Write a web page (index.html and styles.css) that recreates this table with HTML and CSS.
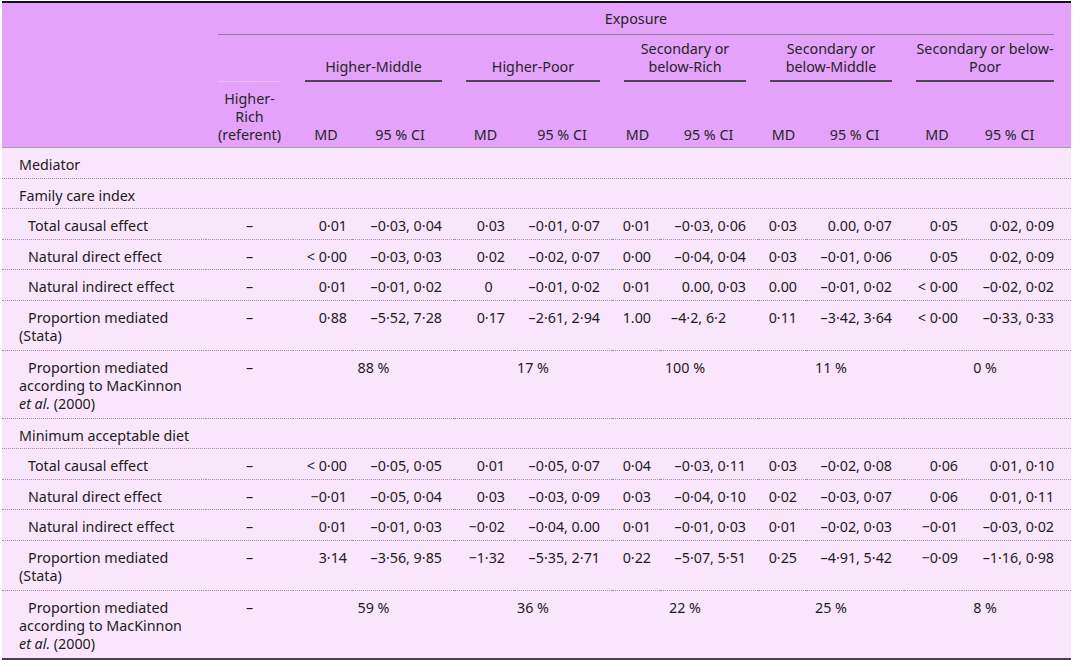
FILE: index.html
```html
<!DOCTYPE html>
<html>
<head>
<meta charset="utf-8">
<link rel="stylesheet" href="styles.css">
</head>
<body>
<table class="tbl">
<colgroup>
<col class="w-label"><col class="w-ref">
<col class="w-md1"><col class="w-ci1">
<col class="w-md2"><col class="w-ci2">
<col class="w-md3"><col class="w-ci3">
<col class="w-md4"><col class="w-ci4">
<col class="w-md5"><col class="w-ci5">
</colgroup>
<thead>
<tr class="h1">
<th></th>
<th colspan="11" class="exp"><div class="rule-light">Exposure</div></th>
</tr>
<tr class="h2">
<th></th>
<th class="ref-blank"><div class="rule-faint"></div></th>
<th colspan="2" class="grp"><div class="rule-dark">Higher-Middle</div></th>
<th colspan="2" class="grp"><div class="rule-dark">Higher-Poor</div></th>
<th colspan="2" class="grp"><div class="rule-dark">Secondary or<br>below-Rich</div></th>
<th colspan="2" class="grp"><div class="rule-dark">Secondary or<br>below-Middle</div></th>
<th colspan="2" class="grp last"><div class="rule-dark">Secondary or below-<br>Poor</div></th>
</tr>
<tr class="h3 cells">
<th></th>
<th>Higher-<br>Rich<br>(referent)</th>
<th>MD</th><th>95 % CI</th>
<th>MD</th><th>95 % CI</th>
<th>MD</th><th>95 % CI</th>
<th>MD</th><th>95 % CI</th>
<th>MD</th><th>95 % CI</th>
</tr>
</thead>
<tbody>
<tr class="sec"><td colspan="12">Mediator</td></tr>
<tr class="sec"><td colspan="12">Family care index</td></tr>
<tr class="cells">
<td class="sub">Total causal effect</td><td>–</td>
<td>0·01</td><td>–0·03, 0·04</td>
<td>0·03</td><td>–0·01, 0·07</td>
<td>0·01</td><td>–0·03, 0·06</td>
<td>0·03</td><td>0.00, 0·07</td>
<td>0·05</td><td>0·02, 0·09</td>
</tr>
<tr class="cells">
<td class="sub">Natural direct effect</td><td>–</td>
<td>&lt; 0·00</td><td>–0·03, 0·03</td>
<td>0·02</td><td>–0·02, 0·07</td>
<td>0·00</td><td>–0·04, 0·04</td>
<td>0·03</td><td>–0·01, 0·06</td>
<td>0·05</td><td>0·02, 0·09</td>
</tr>
<tr class="cells">
<td class="sub">Natural indirect effect</td><td>–</td>
<td>0·01</td><td>–0·01, 0·02</td>
<td class="mid">0</td><td>–0·01, 0·02</td>
<td>0·01</td><td>0.00, 0·03</td>
<td>0.00</td><td>–0·01, 0·02</td>
<td>&lt; 0·00</td><td>–0·02, 0·02</td>
</tr>
<tr class="cells ml">
<td class="sub">Proportion mediated (Stata)</td><td>–</td>
<td>0·88</td><td>–5·52, 7·28</td>
<td>0·17</td><td>–2·61, 2·94</td>
<td>1.00</td><td class="left">–4·2, 6·2</td>
<td>0·11</td><td>–3·42, 3·64</td>
<td>&lt; 0·00</td><td>–0·33, 0·33</td>
</tr>
<tr class="pct ml">
<td class="sub">Proportion mediated according to MacKinnon <i>et al.</i> (2000)</td><td>–</td>
<td colspan="2">88 %</td>
<td colspan="2">17 %</td>
<td colspan="2">100 %</td>
<td colspan="2">11 %</td>
<td colspan="2">0 %</td>
</tr>
<tr class="sec"><td colspan="12">Minimum acceptable diet</td></tr>
<tr class="cells">
<td class="sub">Total causal effect</td><td>–</td>
<td>&lt; 0·00</td><td>–0·05, 0·05</td>
<td>0·01</td><td>–0·05, 0·07</td>
<td>0·04</td><td>–0·03, 0·11</td>
<td>0·03</td><td>–0·02, 0·08</td>
<td>0·06</td><td>0·01, 0·10</td>
</tr>
<tr class="cells">
<td class="sub">Natural direct effect</td><td>–</td>
<td>−0·01</td><td>–0·05, 0·04</td>
<td>0·03</td><td>–0·03, 0·09</td>
<td>0·03</td><td>–0·04, 0·10</td>
<td>0·02</td><td>–0·03, 0·07</td>
<td>0·06</td><td>0·01, 0·11</td>
</tr>
<tr class="cells">
<td class="sub">Natural indirect effect</td><td>–</td>
<td>0·01</td><td>–0·01, 0·03</td>
<td>−0·02</td><td>–0·04, 0.00</td>
<td>0·01</td><td>–0·01, 0·03</td>
<td>0·01</td><td>–0·02, 0·03</td>
<td>−0·01</td><td>–0·03, 0·02</td>
</tr>
<tr class="cells ml">
<td class="sub">Proportion mediated (Stata)</td><td>–</td>
<td>3·14</td><td>–3·56, 9·85</td>
<td>−1·32</td><td>–5·35, 2·71</td>
<td>0·22</td><td>–5·07, 5·51</td>
<td>0·25</td><td>–4·91, 5·42</td>
<td>−0·09</td><td>–1·16, 0·98</td>
</tr>
<tr class="pct ml">
<td class="sub">Proportion mediated according to MacKinnon <i>et al.</i> (2000)</td><td>–</td>
<td colspan="2">59 %</td>
<td colspan="2">36 %</td>
<td colspan="2">22 %</td>
<td colspan="2">25 %</td>
<td colspan="2">8 %</td>
</tr>
</tbody>
</table>
</body>
</html>
```
FILE: styles.css
```css
html, body {
  background: #ffffff;
}
body {
  margin: 0;
  padding: 1px 2px 0 2px;
  font-family: "Noto Sans", "Open Sans", sans-serif;
  font-size: 14.3px;
  color: #1c1c1c;
}
.tbl {
  width: 1069px;
  table-layout: fixed;
  border-collapse: separate;
  border-spacing: 0;
  border-top: 2px solid #111;
  border-bottom: 2px solid #444;
  line-height: 18px;
}
.w-label { width: 204px; }
.w-ref { width: 87px; }
.w-md1 { width: 59px; }
.w-ci1 { width: 102px; }
.w-md2 { width: 60px; }
.w-ci2 { width: 98px; }
.w-md3 { width: 48px; }
.w-ci3 { width: 98px; }
.w-md4 { width: 48px; }
.w-ci4 { width: 98px; }
.w-md5 { width: 58px; }
.w-ci5 { width: 109px; }

th, td {
  padding: 0;
  font-weight: normal;
  text-align: left;
  vertical-align: top;
}
thead th {
  background: #e4a2fb;
  color: #262626;
}

/* header row 1 */
.h1 .exp {
  padding: 7px 17px 0 12px;
  text-align: center;
}
.rule-light {
  border-bottom: 1px solid #8d7b96;
  padding-bottom: 6px;
}

/* header row 2 */
.h2 th {
  vertical-align: bottom;
  padding: 5px 12px 0 12px;
  text-align: center;
}
.h2 .grp.last { padding-right: 17px; }
.h2 .ref-blank { padding: 0 12px; }
.rule-dark {
  border-bottom: 2px solid #4d4452;
  padding-bottom: 4px;
}
.rule-faint {
  border-bottom: 1px solid #ebbdfb;
}

/* header row 3 */
.h3 th {
  vertical-align: bottom;
  text-align: center;
  padding-top: 8px;
  padding-bottom: 3px;
  border-bottom: 1px solid #a89aa8;
}

/* body */
tbody td {
  background: #fae6fc;
  padding-top: 8px;
  padding-bottom: 3.5px;
  border-bottom: 1px dotted #9a939a;
}
tbody tr.ml td {
  padding-bottom: 5px;
}
tbody tr:last-child td {
  border-bottom: none;
}
.sec td {
  padding-left: 17px;
}
.sub {
  padding-left: 17px;
  padding-right: 22px;
  text-indent: 9px;
}

/* per-column paddings for 12-cell rows */
.cells > :nth-child(1) { padding-left: 17px; }
.cells > :nth-child(2) { padding-left: 12px; padding-right: 12px; text-align: center; }
.cells > :nth-child(3) { padding-left: 4px; padding-right: 5px; }
.cells > :nth-child(4) { padding-left: 4px; padding-right: 12px; }
.cells > :nth-child(5) { padding-left: 4px; padding-right: 9px; }
.cells > :nth-child(6) { padding-left: 4px; padding-right: 12px; }
.cells > :nth-child(7) { padding-left: 4px; padding-right: 9px; }
.cells > :nth-child(8) { padding-left: 4px; padding-right: 12px; }
.cells > :nth-child(9) { padding-left: 4px; padding-right: 9px; }
.cells > :nth-child(10) { padding-left: 4px; padding-right: 12px; }
.cells > :nth-child(11) { padding-left: 4px; padding-right: 4px; }
.cells > :nth-child(12) { padding-left: 3px; padding-right: 17px; }

.h3 > th:nth-child(3) { padding-left: 12px; }
.h3 > th:nth-child(4) { padding-left: 6px; }
.h3 > th:nth-child(5) { padding-left: 12px; }
.h3 > th:nth-child(6) { padding-left: 10px; }
.h3 > th:nth-child(7) { padding-left: 12px; }
.h3 > th:nth-child(8) { padding-left: 11px; }
.h3 > th:nth-child(9) { padding-left: 12px; }
.h3 > th:nth-child(10) { padding-left: 11px; }
.h3 > th:nth-child(11) { padding-left: 12px; }
.h3 > th:nth-child(2) { padding-left: 8px; padding-right: 8px; }

tbody .cells > td:nth-child(n+3) { text-align: right; white-space: nowrap; }
tbody .cells > td.mid { text-align: center; padding-left: 18px; }
tbody .cells > td.left { text-align: left; padding-left: 11px; }
.h3 th:first-child { text-align: left; }

/* percentage rows */
.pct > td:nth-child(2) { padding-left: 12px; padding-right: 12px; text-align: center; }
.pct > td:nth-child(n+3) { padding-left: 12px; padding-right: 12px; text-align: center; }
.pct > td:nth-child(7) { padding-right: 17px; }
```
